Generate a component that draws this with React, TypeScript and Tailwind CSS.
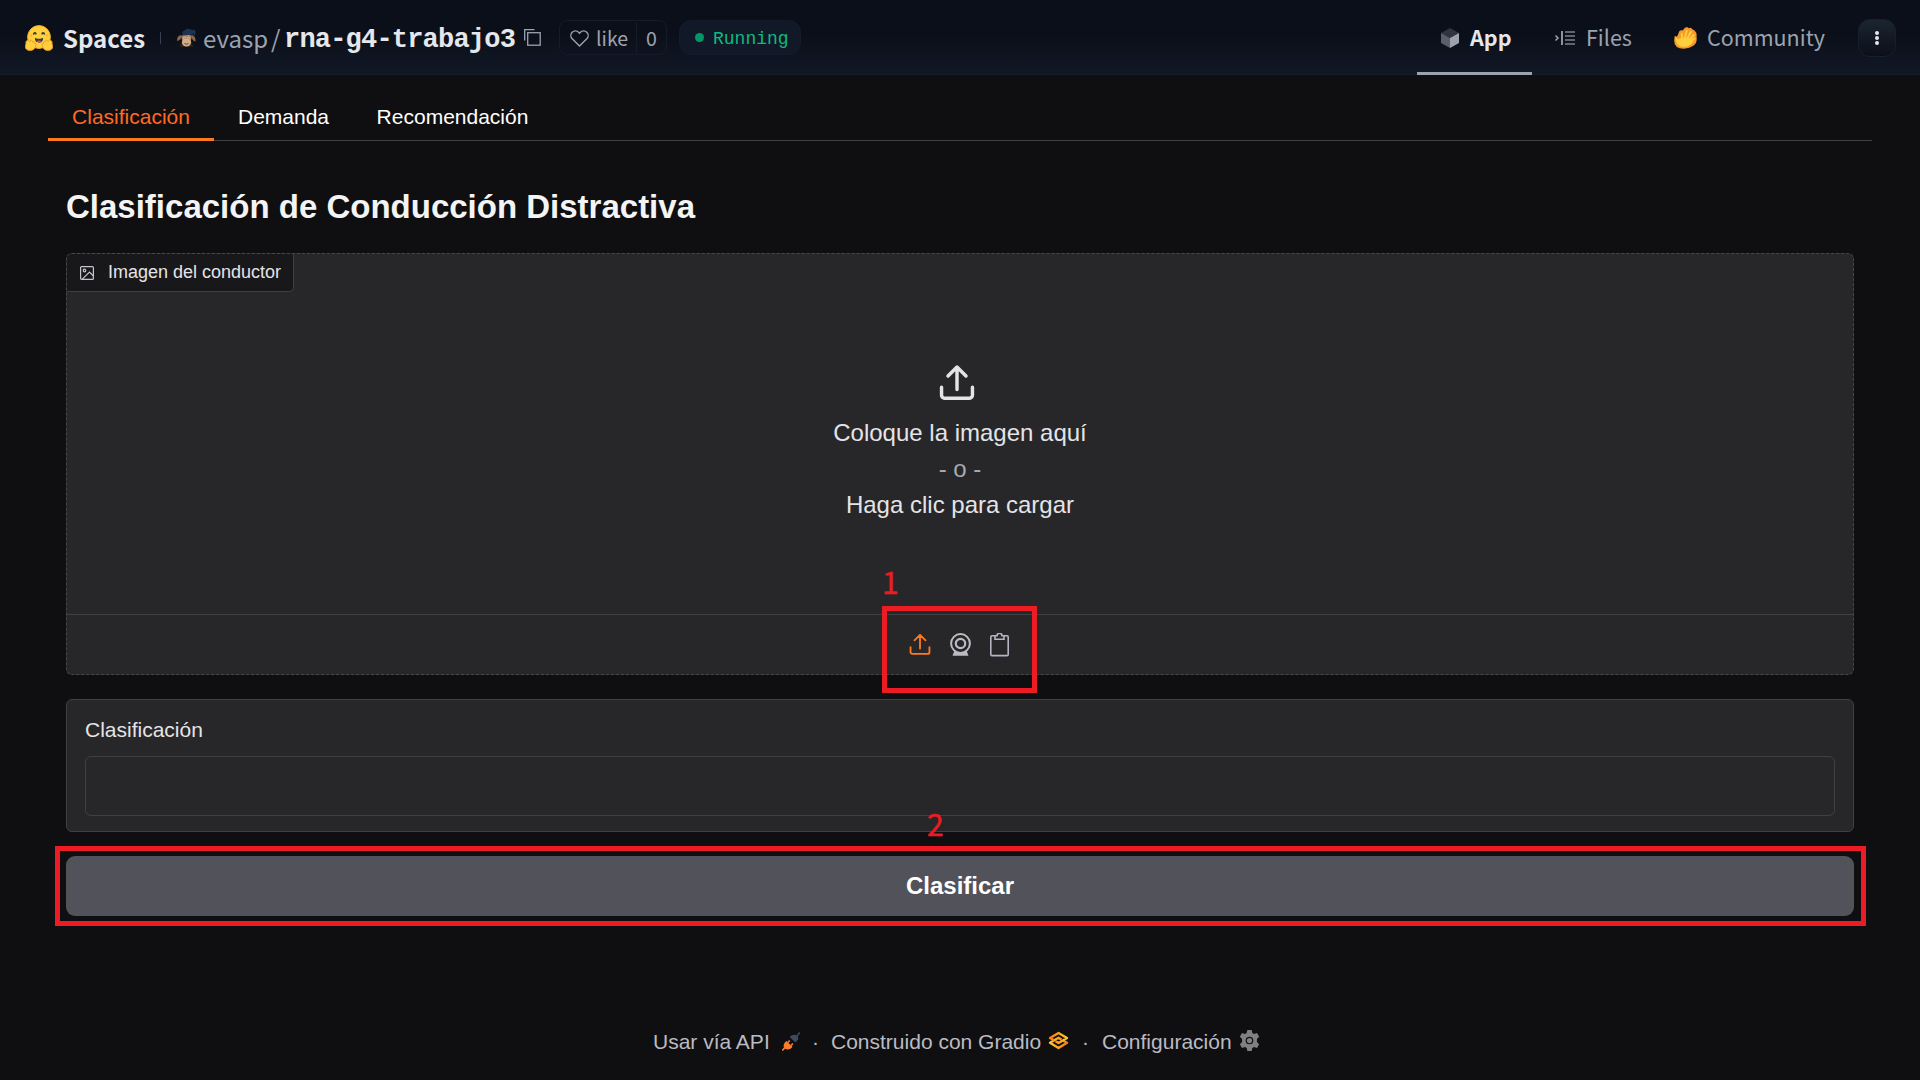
import React from "react";

const UploadGlyph = ({ className, width = 2 }: { className: string; width?: number }) => (
  <svg className={className} viewBox="0 0 24 24" fill="none" stroke="currentColor" strokeWidth={width} strokeLinecap="round" strokeLinejoin="round">
    <path d="M1.700 15.500v5.400a1.900 1.900 0 0 0 1.900 1.900h16.800a1.900 1.900 0 0 0 1.900-1.900v-5.400M12 17V2M6 8l6-6 6 6" />
  </svg>
);

const HuggingFace = () => (
  <svg className="h-[26px] w-[28px] shrink-0" viewBox="0 0 28 26">
    <circle cx="14" cy="12" r="11.400" fill="#FFD03B" stroke="#F7A92B" strokeWidth="1" />
    <path d="M10 12.800c2 1.300 6 1.300 8 0 .4 3.500-1.800 4.900-4 4.900s-4.400-1.400-4-4.900z" fill="#3A3B45" />
    <path d="M11.500 16.600c1.300-1.500 3.700-1.500 5 0-1.400 1.500-3.600 1.500-5 0z" fill="#F94040" />
    <path d="M8.800 8.800c.4-1.100 1.500-1.200 2-.2M17.200 8.600c.5-1 1.600-.9 2 .2" stroke="#3A3B45" strokeWidth="1.800" fill="none" strokeLinecap="round" />
    <circle cx="6.200" cy="10.600" r="1" fill="#FFAA33" />
    <circle cx="21.800" cy="10.600" r="1" fill="#FFAA33" />
    <path d="M1.700 15.800c1-1.300 2.400-.6 3.100.9.600-2.300 2.800-1.900 2.700.3 1.200-1.200 2.600-.2 1.900 1.500 1.400-.5 2 .7 1.500 1.900-.6 3-2.800 5-5.700 5-3 0-5-1.300-4.700-3.900-.7-.9-.1-1.800.6-2.200-.4-1.300-.2-2.800.6-3.500z" fill="#FFD03B" stroke="#F49A2C" strokeWidth="1" />
    <path d="M26.300 15.800c-1-1.300-2.400-.6-3.100.9-.6-2.300-2.800-1.900-2.700.3-1.200-1.200-2.600-.2-1.900 1.500-1.400-.5-2 .7-1.500 1.900.6 3 2.800 5 5.700 5 3 0 5-1.300 4.700-3.900.7-.9.1-1.800-.6-2.200.4-1.300.2-2.800-.6-3.500z" fill="#FFD03B" stroke="#F49A2C" strokeWidth="1" />
  </svg>
);

const Avatar = () => (
  <svg className="h-[21px] w-[21px] shrink-0" viewBox="0 0 21 21">
    <path d="M4 20q0-6 6.500-6t6.500 6z" fill="#2b2019" />
    <path d="M5 8C2 8.500.8 11 1.200 14c2 0 4-2.500 5-4.500zM15.500 8c3 .5 4.500 3.500 4 6.500-2 0-3.700-3-4.700-5z" fill="#8f6350" />
    <ellipse cx="10.500" cy="11.500" rx="4.800" ry="5.500" fill="#b08560" />
    <ellipse cx="10.500" cy="15.500" rx="4.600" ry="4" fill="#d0ad84" />
    <circle cx="8.700" cy="11" r="1.300" fill="#e8dccb" />
    <circle cx="12.300" cy="11" r="1.300" fill="#e8dccb" />
    <circle cx="8.900" cy="11.100" r=".6" fill="#111" />
    <circle cx="12.100" cy="11.100" r=".6" fill="#111" />
    <path d="M8.500 16.500q2 1.500 4 0" stroke="#5b3d2c" fill="none" />
    <path d="M6 5l5-3.500 8 2-2 4-10 1z" fill="#1d3350" />
    <path d="M18.700 3.500v5" stroke="#28456b" />
  </svg>
);

const Cube = () => (
  <svg className="h-[20px] w-[18px] shrink-0" viewBox="0 0 18 20">
    <path d="M9 0l9 5-9 5-9-5z" fill="#30343e" />
    <path d="M0 5l9 5v10l-9-5z" fill="#5a5f6c" />
    <path d="M18 5l-9 5v10l9-5z" fill="#9ca3af" />
  </svg>
);

const FilesIcon = () => (
  <svg className="h-[14px] w-[20px] shrink-0" viewBox="0 0 20 14" fill="none">
    <path d="M.5 4.500L3 7 .5 9.500" stroke="#9ca3af" strokeWidth="1.500" />
    <path d="M7 0v14" stroke="#9ca3af" strokeWidth="1.800" />
    <path d="M10 1h10M10 5h10M10 9h10M10 13h10" stroke="#5f6470" strokeWidth="1.800" />
  </svg>
);

const HandIcon = () => (
  <svg className="h-[22px] w-[23px] shrink-0" viewBox="0 0 23 22" strokeLinecap="round" strokeLinejoin="round">
    <path d="M1.200 9.800L3.500 10.500 6 4.500 7.500 4 9 4.200 11.500 1.200 13.500 1 14.800 2.200 16.500 1.500 18.500 3 20 4 21.800 6.500 22 12.500C22 17 17.500 20.500 10 21 4.500 21 .9 18.500.9 14z" fill="#F99A2C" stroke="#F99A2C" strokeWidth="1.400" />
    <path d="M3.500 13.500Q11 10 18.500 13 17.500 18 10 19 3.500 19 3.500 13.500z" fill="#FFD03B" stroke="#FFD03B" strokeWidth="2" />
    <path d="M8 12.500L7.800 7M10.500 12L12.700 4M13 12L17 4.800M15.300 13L19.700 8M16.500 14.500L20.500 11.500M3.200 14L2.200 11.500" fill="none" stroke="#FFD03B" strokeWidth="1.900" />
  </svg>
);

const ImageIcon = () => (
  <svg className="h-[14px] w-[14px] shrink-0" viewBox="0 0 14 14" fill="none" stroke="#c4c4ca" strokeWidth="1.200">
    <rect x=".6" y=".6" width="12.800" height="12.800" rx="1" />
    <circle cx="4.500" cy="4.500" r="1.300" />
    <path d="M2 13.400L9.500 6l3.900 4" />
  </svg>
);

const Webcam = () => (
  <svg className="h-[23px] w-[21px]" viewBox="0 0 21 23" fill="none" stroke="#bbbbc2">
    <circle cx="10.500" cy="10.500" r="9.400" strokeWidth="2" />
    <circle cx="10.500" cy="10.500" r="4.700" strokeWidth="2.200" />
    <path d="M4.500 17.500L2.500 22.700h16l-2-5.200q-6 4-12 0z" fill="#bbbbc2" stroke="none" />
  </svg>
);

const Clipboard = () => (
  <svg className="h-[24px] w-[19px]" viewBox="0 0 19 24" fill="none" stroke="#b4b6c0" strokeWidth="1.600">
    <rect x=".8" y="2.800" width="17.400" height="19.800" rx="1.200" />
    <path d="M5 2.800v3.500h9V2.800h-2a2.500 2.500 0 0 0-5 0z" fill="#27272a" />
  </svg>
);

const Plug = () => (
  <svg className="h-[19px] w-[18px]" viewBox="0 0 18 19">
    <path d="M.3 18.500l2.500-2.800" stroke="#ff7c28" strokeWidth="1.700" />
    <path d="M4.300 9l6.200 5.800c-1.800 2.700-5 3.500-7.400 1.900s-1.700-5.300 1.200-7.700z" fill="#ff7c28" />
    <path d="M5.800 10.500l1.900-2M9 13.500l1.900-2" stroke="#ff7c28" strokeWidth="1.700" />
    <path d="M7.800 5l5.300 5.300c2.800-1.300 4-4 2.400-6.200-2.100-2-5.500-1.700-7.700.9z" fill="#3f4a5c" />
    <path d="M15 4l2.700-3.500" stroke="#3f4a5c" strokeWidth="1.500" />
  </svg>
);

const GradioLogo = () => (
  <svg className="h-[19px] w-[21px]" viewBox="0 0 21 19" fill="none" strokeLinejoin="round">
    <defs>
      <linearGradient id="gradio" x1="0" y1="0" x2="1" y2="0">
        <stop offset="0" stopColor="#fb7c12" />
        <stop offset="1" stopColor="#fdc52c" />
      </linearGradient>
      <linearGradient id="gradioLower" x1="0" y1="0" x2="1" y2="0">
        <stop offset="0" stopColor="#fdc52c" />
        <stop offset="1" stopColor="#fb7c12" />
      </linearGradient>
    </defs>
    <path d="M15 9.500l4 2.300-8.500 5.200L2 11.800l8.500-5 3 1.800" stroke="url(#gradioLower)" strokeWidth="2.400" />
    <path d="M6 9.300L2 7l8.500-5L19 7l-8.500 5-3-1.800" stroke="url(#gradio)" strokeWidth="2.400" />
  </svg>
);

const Gear = () => (
  <svg className="h-[21px] w-[21px]" viewBox="0 0 24 24" fill="#808080">
    <path fillRule="evenodd" d="M9.500 0h5l.7 3.400 2 1.100 3.400-1.100L23 7.700l-2.500 2.500v3.600L23 16.300l-2.400 4.300-3.400-1.100-2 1.100-.7 3.400h-5l-.7-3.400-2-1.100-3.400 1.100L1 16.300l2.500-2.500v-3.600L1 7.700l2.400-4.300 3.400 1.100 2-1.100zM12 7.600a4.400 4.400 0 1 0 0 8.800 4.400 4.400 0 0 0 0-8.800z" />
    <circle cx="12" cy="12" r="3" />
  </svg>
);

function Header() {
  return (
    <header className="flex h-[75px] items-stretch justify-between bg-linear-to-b from-[#0b0f19] from-45% to-[#111827] font-['Noto_Sans_CJK_SC',sans-serif] shadow-[inset_0_-1px_0_#141d2c]">
      <div className="flex items-center pl-[25px]">
        <HuggingFace />
        <span className="ml-[10px] w-[97px] text-[24px] leading-[36px] font-bold whitespace-nowrap text-[#e5e7eb]">Spaces</span>
        <span className="h-[12px] w-px bg-[#374151]" />
        <span className="ml-[15px]"><Avatar /></span>
        <span className="ml-[6px] w-[66px] text-[24px] leading-[36px] whitespace-nowrap text-[#9ca3af]">evasp</span>
        <span className="ml-[2px] w-[12px] text-[24px] leading-[36px] text-[#9ca3af]">/</span>
        <span className="ml-px w-[235px] pt-[4px] font-['Liberation_Mono',monospace] text-[27px] leading-[36px] font-bold tracking-[-0.8px] whitespace-nowrap text-[#e5e7eb]">rna-g4-trabajo3</span>
        <svg className="ml-[5px] h-[17px] w-[17px]" viewBox="0 0 17 17" fill="none" stroke="#9ca3af" strokeWidth="1.300">
          <rect x="3.700" y="3.700" width="12.500" height="12.500" />
          <path d="M.7 11.500V.7h9.800" />
        </svg>
        <div className="ml-[18px] flex h-[35px] w-[108px] items-center rounded-lg border border-[#151b29] pt-px text-[19.500px] leading-[30px] text-[#9ca3af]">
          <svg className="ml-[10px] h-[17px] w-[19px]" viewBox="0 0 19 17" fill="none" stroke="#9ca3af" strokeWidth="1.400">
            <path d="M9.500 16L2.200 8.700a4.600 4.600 0 0 1 0-6.500 4.500 4.500 0 0 1 6.400 0l.9 1 .9-1a4.500 4.500 0 0 1 6.400 0 4.600 4.600 0 0 1 0 6.500z" />
          </svg>
          <span className="ml-[7px]">like</span>
          <span className="ml-auto flex h-full w-[30px] items-center justify-center border-l border-[#151b29]">0</span>
        </div>
        <div className="ml-[12px] flex h-[35px] w-[122px] items-center rounded-[12px] border border-[#141c2b] bg-[#111827] pl-[15px]">
          <span className="h-[9px] w-[9px] rounded-full bg-[#059669]" />
          <span className="ml-[9px] pt-[2px] font-['Liberation_Mono',monospace] text-[18px] leading-[24px] text-[#10b981]">Running</span>
        </div>
      </div>
      <nav className="flex items-stretch pr-[24px] text-[21.500px] text-[#9ca3af]">
        <a className="flex w-[115px] items-center border-b-[3px] border-[#9ca3af] pt-[3px] pl-[24px] font-bold text-[#e5e7eb]">
          <Cube />
          <span className="ml-[11px]">App</span>
        </a>
        <a className="flex w-[119px] items-center pl-[23px]">
          <FilesIcon />
          <span className="ml-[11px]">Files</span>
        </a>
        <a className="flex w-[196px] items-center pl-[23px]">
          <HandIcon />
          <span className="ml-[10px]">Community</span>
        </a>
        <button className="ml-[11px] flex h-[38px] w-[38px] items-center justify-center self-center rounded-[12px] border border-[#17202d] bg-linear-to-b from-[#1b2531] to-[#0b0f19]">
          <svg className="h-[14px] w-[4px]" viewBox="0 0 4 14" fill="#e5e7eb">
            <circle cx="2" cy="2" r="2" />
            <circle cx="2" cy="7" r="2" />
            <circle cx="2" cy="12" r="2" />
          </svg>
        </button>
      </nav>
    </header>
  );
}

function Tabs() {
  return (
    <div className="mx-[48px] mt-[18px] flex h-[48px] text-[21px] text-white shadow-[inset_0_-1px_0_#3f3f46]">
      <button className="h-full w-[166px] border-b-[3px] border-[#ff7a1f] pt-[2px] text-center text-[#ff6a22]">Clasificación</button>
      <button className="h-full w-[139px] pb-px">Demanda</button>
      <button className="h-full w-[199px] pb-px">Recomendación</button>
    </div>
  );
}

export default function App() {
  return (
    <div className="relative h-[1080px] w-[1920px] overflow-hidden bg-[#0f0f11] font-['Liberation_Sans',Arial,sans-serif]">
      <Header />
      <Tabs />
      <main className="px-[66px] pt-[42px]">
        <h2 className="text-[33px] leading-[48px] font-bold text-[#f4f4f5]">Clasificación de Conducción Distractiva</h2>
        <section className="mt-[22px] flex h-[422px] flex-col rounded-[6px] border border-dashed border-[#46464b] bg-[#27272a]">
          <div className="flex h-[38px] w-[227px] items-center rounded-tl-[5px] rounded-br-[5px] border-r border-b border-[#3f3f46] bg-[#18181b] pl-[13px]">
            <ImageIcon />
            <span className="ml-[14px] text-[18px] text-[#e4e4e7]">Imagen del conductor</span>
          </div>
          <div className="flex flex-col items-center pt-[72px] text-[24px] leading-[36px] text-[#e4e4e7]">
            <UploadGlyph className="mr-[6px] mb-[15px] h-[36px] w-[36px]" width={2.300} />
            <span>Coloque la imagen aquí</span>
            <span className="text-[#a9a9b1]">- o -</span>
            <span>Haga clic para cargar</span>
          </div>
          <div className="mt-auto flex h-[60px] items-center justify-center gap-[19px] border-t border-[#3f3f46] pr-[2px]">
            <span className="pb-px text-[#ff7a1f]"><UploadGlyph className="h-[22px] w-[22px]" width={2} /></span>
            <Webcam />
            <Clipboard />
          </div>
        </section>
        <section className="mt-[24px] h-[133px] rounded-[6px] border border-[#3f3f46] bg-[#27272a] px-[18px] pt-[14px]">
          <div className="text-[21px] leading-[32px] text-[#e4e4e7]">Clasificación</div>
          <div className="mt-[10px] h-[60px] rounded-[6px] border border-[#3f3f46]" />
        </section>
        <button className="mt-[24px] h-[60px] w-full rounded-[9px] bg-[#52525b] text-[24px] font-bold text-white">Clasificar</button>
      </main>
      <footer className="mt-[111px] flex h-[30px] items-center pl-[653px] text-[21px] leading-[30px] whitespace-nowrap text-[#bbbbc2]">
        <span className="w-[129px]">Usar vía API</span>
        <span className="pb-[2px]"><Plug /></span>
        <span className="w-[31px] text-center">·</span>
        <span className="w-[217px]">Construido con Gradio</span>
        <span className="pb-[4px]"><GradioLogo /></span>
        <span className="w-[33px] text-center">·</span>
        <span className="w-[137px]">Configuración</span>
        <span className="pb-[3px]"><Gear /></span>
      </footer>
      <div className="absolute top-[606px] left-[882px] h-[87px] w-[155px] border-[5px] border-[#ed1c24]" />
      <div className="absolute top-[846px] left-[55px] h-[80px] w-[1811px] border-[5px] border-[#ed1c24]" />
      <span className="absolute top-[561px] left-[882px] font-['Noto_Sans_CJK_SC',sans-serif] text-[30px] leading-[40px] text-[#ed1c24] [-webkit-text-stroke:0.4px_#ed1c24]">1</span>
      <span className="absolute top-[803px] left-[927px] font-['Noto_Sans_CJK_SC',sans-serif] text-[30px] leading-[40px] text-[#ed1c24] [-webkit-text-stroke:0.4px_#ed1c24]">2</span>
    </div>
  );
}
